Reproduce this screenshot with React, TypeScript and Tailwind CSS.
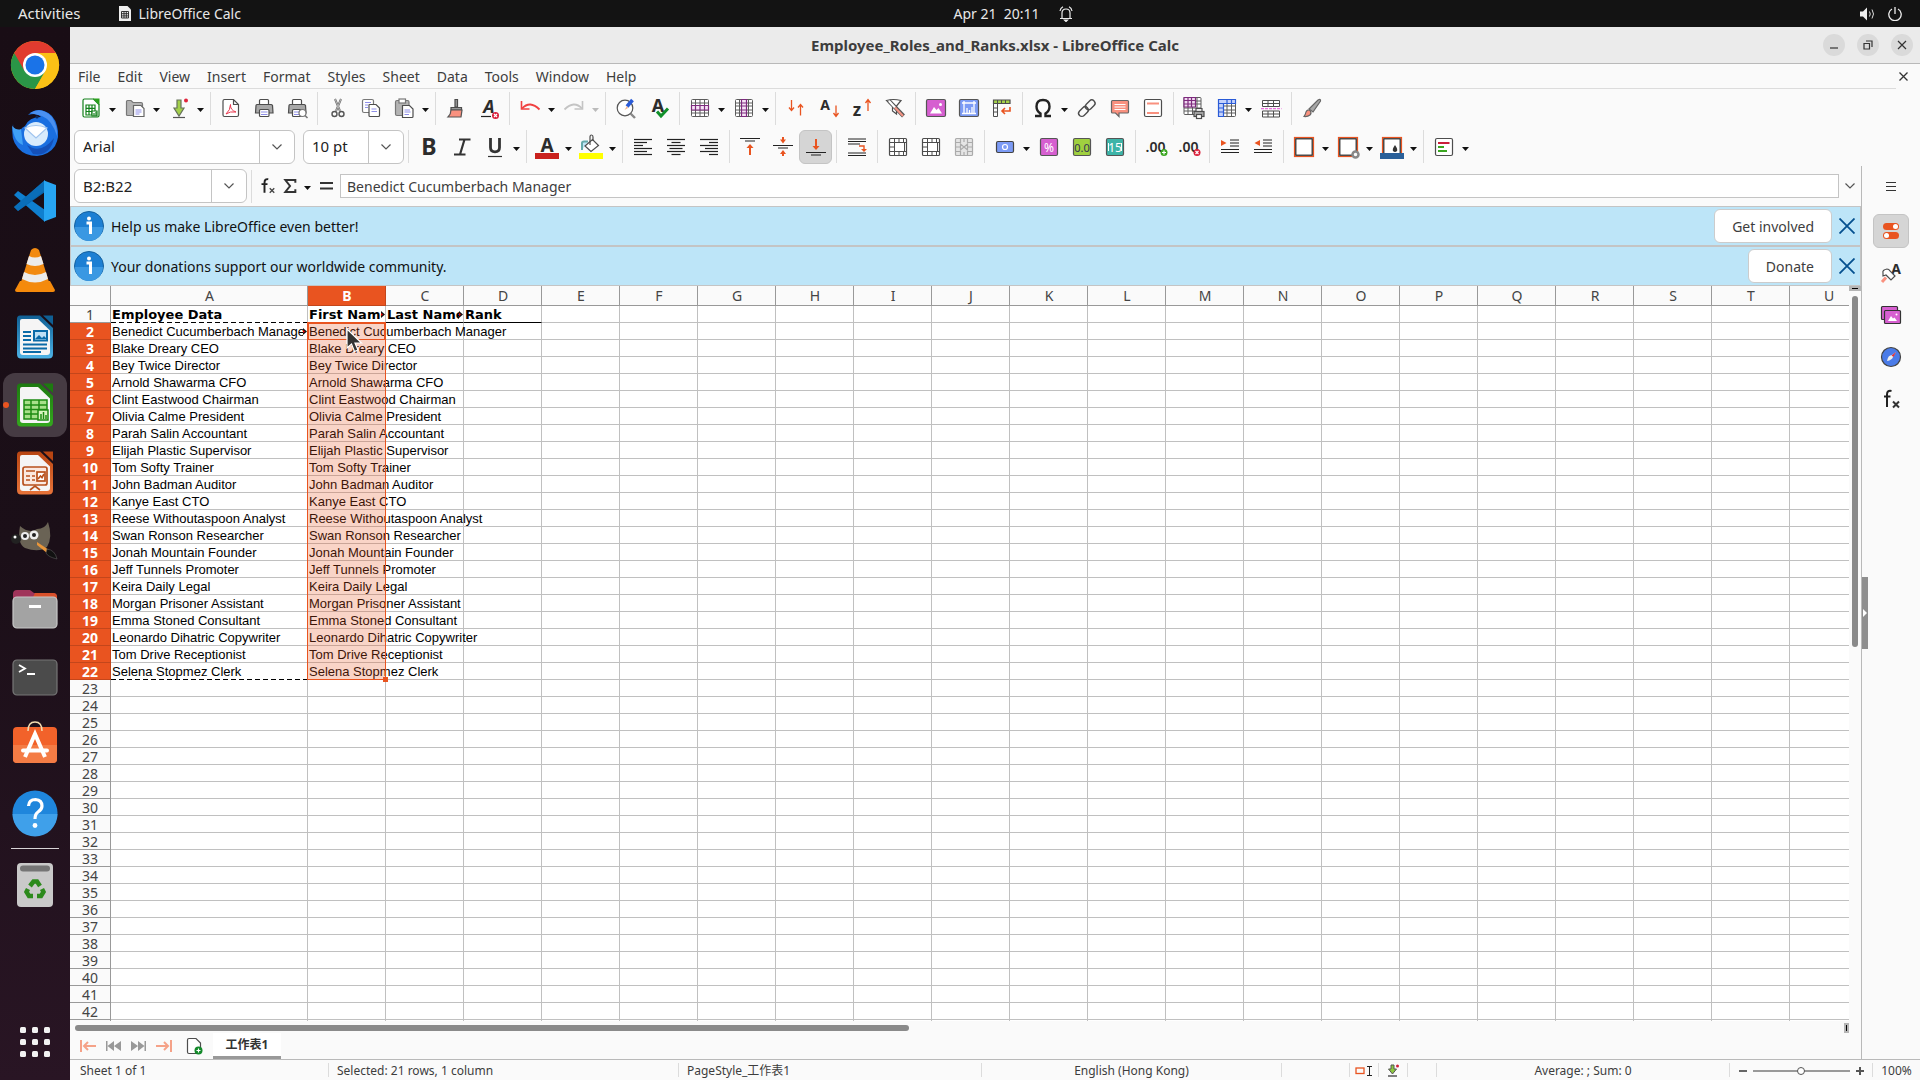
import React from "react";

const people = [
  "Benedict Cucumberbach Manager", "Blake Dreary CEO", "Bey Twice Director", "Arnold Shawarma CFO",
  "Clint Eastwood Chairman", "Olivia Calme President", "Parah Salin Accountant", "Elijah Plastic Supervisor",
  "Tom Softy Trainer", "John Badman Auditor", "Kanye East CTO", "Reese Withoutaspoon Analyst",
  "Swan Ronson Researcher", "Jonah Mountain Founder", "Jeff Tunnels Promoter", "Keira Daily Legal",
  "Morgan Prisoner Assistant", "Emma Stoned Consultant", "Leonardo Dihatric Copywriter",
  "Tom Drive Receptionist", "Selena Stopmez Clerk",
];
const columns = "ABCDEFGHIJKLMNOPQRSTU".split("");
const menus = ["File", "Edit", "View", "Insert", "Format", "Styles", "Sheet", "Data", "Tools", "Window", "Help"];

const G = "#4d4d4d";
const O = "#e95420";
const P = "#7d2a7d";

function Ic({ children, s = 24, vb = 24 }: { children: React.ReactNode; s?: number; vb?: number }) {
  return (
    <svg width={s} height={s} viewBox={`0 0 ${vb} ${vb}`} fill="none" stroke={G} strokeWidth="1.2" className="shrink-0 overflow-visible" aria-hidden="true">
      {children}
    </svg>
  );
}

/* ---------- toolbar drawings ---------- */
const box = <rect x="3.5" y="3.5" width="17" height="17" rx="1" fill="#fff" />;
const printer = (
  <>
    <path d="M7.5 9V4.5Q7.5 3.5 8.5 3.5H15.5Q16.5 3.5 16.5 4.5V9" fill="#fff" />
    <path d="M4 9.5Q4 8.5 5 8.5H19Q20 8.5 20.5 9.5L21 17H3.5Z" fill="#a8a8a8" />
    <rect x="7.5" y="13.5" width="9.500" height="7" rx="1" fill="#fff" />
    <path d="M9 16H15.5M9 18.500H15.5" stroke="#8f8fe8" />
  </>
);
const alignLines = (w: number[], from: "l" | "c" | "r") =>
  w.map((n, i) => {
    const x = from === "l" ? 3 : from === "c" ? 12 - n / 2 : 21 - n;
    return <path key={i} d={`M${x} ${4.5 + i * 3}H${x + n}`} stroke="#222" />;
  });
const grid = <path d="M3.500 4.500Q3.500 3.500 4.500 3.500H19.500Q20.500 3.500 20.500 4.500V19.500Q20.500 20.500 19.500 20.500H4.500Q3.500 20.500 3.500 19.500ZM3.500 7H20.500M3.500 10H20.500M3.500 14H20.500M3.500 17H20.500M7.500 3.500V20.500M12 3.500V20.500M16.500 3.500V20.500" fill="#fff" stroke="#5c5c5c" strokeWidth="1" />;
const merge = (
  <>
    {box}
    <path d="M8.500 3.500V20.500M3.500 7.500H20.500M3.500 12H8.500M3.500 16.500H20.500M13 3.500V7.500M17.500 3.500V7.500M13 16.500V20.500M17.500 16.500V20.500M18.500 7.500V16.500" strokeWidth="1" />
  </>
);
const letter = (t: string, x: number, y: number, size: number, extra: React.SVGProps<SVGTextElement> = {}) => (
  <text x={x} y={y} fontSize={size} fontFamily="Noto Sans, sans-serif" fontWeight="bold" fill="#2c2c2c" stroke="none" textAnchor="middle" {...extra}>{t}</text>
);
const badge = (c: string, x: number, y: number, plus: boolean) => (
  <>
    <circle cx={x} cy={y} r="3.500" fill={c} stroke="none" />
    {plus ? <path d={`M${x - 2} ${y}H${x + 2}M${x} ${y - 2}V${y + 2}`} stroke="#fff" strokeWidth="1.200" /> : <path d={`M${x - 1.5} ${y - 1.5}L${x + 1.5} ${y + 1.5}M${x + 1.5} ${y - 1.5}L${x - 1.5} ${y + 1.5}`} stroke="#fff" strokeWidth="1.200" />}
  </>
);
const lens = <><circle cx="17.500" cy="17" r="3.500" fill="#fff" stroke="#777" /><path d="M20 19.500L22.500 22" stroke="#777" strokeWidth="1.600" /></>;

const icons: Record<string, React.ReactNode> = {
  "New": <><path d="M5.500 3H14.500L20 8.500V19.500Q20 21 18.500 21H5.500Q4 21 4 19.500V4.500Q4 3 5.500 3Z" fill="#fff" stroke="#12801a" /><path d="M14 2.500H20.500V9Z" fill="#2aa01c" stroke="none" /><path d="M7 9H16V19H7ZM7 12.300H16M7 15.500H16M10 9V19M13 9V19" stroke="#12801a" /><path d="M13 20V15H18V20Z" fill="#fff" stroke="#12801a" /><path d="M15 20V17M17 20V16" stroke="#12801a" /></>,
  "Open": <><path d="M3.500 19V5.500Q3.500 4.500 4.500 4.500H8L10 6.500H18Q19.500 6.500 19.500 8V19Q19.500 19.500 18.500 19.500H4.500Q3.500 19.500 3.500 18.500Z" fill="#b3b3b3" stroke="#777" /><path d="M10.500 9.500H18L21 12.500V20.500H10.500Z" fill="#fff" stroke="#666" /><path d="M12.500 14H18.500M12.500 16H18.500M12.500 18H16.500" stroke="#8f8fe8" /></>,
  "Save": <><path d="M10 4H14V12H17L12 20L7 12H10Z" fill="#a3d04a" stroke="#66725a" /><path d="M6 21.500H18" stroke="#555" /><circle cx="19" cy="4.500" r="2" fill="#e0243b" stroke="none" /></>,
  "Export as PDF": <><path d="M5.500 3.500H14.500L19.500 8.500V19Q19.500 20.500 18 20.500H5.500Q4 20.500 4 19V5Q4 3.500 5.500 3.500ZM14.500 3.500V8.500H19.500" fill="#fff" /><path d="M7 18Q11.500 14 11.500 8.500Q11 14 17 16Q11 15 7 18Z" stroke="#e8384f" strokeWidth="1" /></>,
  "Print": printer,
  "Print Preview": <>{printer}{lens}</>,
  "Cut": <><path d="M9 3L14 15M15 3L10 15" stroke="#666" strokeWidth="2" /><path d="M9 3L14 15M15 3L10 15" stroke="#ccc" strokeWidth="0.800" /><circle cx="8.500" cy="18" r="2.500" stroke="#555" strokeWidth="1.400" /><circle cx="15.500" cy="18" r="2.500" stroke="#555" strokeWidth="1.400" /></>,
  "Copy": <><rect x="3.500" y="3.500" width="11" height="13" rx="1.500" fill="#fff" stroke="#777" /><path d="M6 6.500H12M6 9H9M6 11.500H9" stroke="#8f8fe8" /><path d="M10.500 8.500H17L20.500 12V19.500Q20.500 20.500 19.500 20.500H11Q10 20.500 10 19.500V9Q10 8.500 10.500 8.500Z" fill="#fff" /><path d="M12.500 13H17.500M12.500 15.500H18" stroke="#8f8fe8" /></>,
  "Paste": <><rect x="3.500" y="4.500" width="13.500" height="15" rx="1.500" fill="#b3b3b3" stroke="#777" /><rect x="7" y="3" width="6.500" height="4" fill="#fff" stroke="#777" /><path d="M10.500 9.500H17.500L21 13V20.500Q21 21.500 20 21.500H10.500Z" fill="#fff" /><path d="M12.500 14H18M12.500 16H18.500M12.500 18.500H17" stroke="#8f8fe8" /></>,
  "Clone Formatting": <><path d="M11 3.500H13.500V11H11Z" fill="#999" /><path d="M7 11.500H17.500V14H7Z" fill="#999" /><path d="M7 14H18L17 21H4Q7 18 7 14Z" fill="#f9917f" stroke="#555" /></>,
  "Clear Direct Formatting": <>{letter("A", 12, 17, 18, { fontStyle: "italic" })}<path d="M4 20.500H14" stroke="#222" />{badge("#d9203a", 18.500, 19.500, false)}</>,
  "Undo": <><path d="M3.500 5V13H11.500" stroke="#f04040" strokeWidth="1.600" /><path d="M4 12.500Q12 4 21.500 13.500" stroke="#f04040" strokeWidth="1.800" /></>,
  "Redo": <><path d="M20.500 5V13H12.500" stroke="#c4c4c4" strokeWidth="1.600" /><path d="M20 12.500Q12 4 2.500 13.500" stroke="#c4c4c4" strokeWidth="1.800" /></>,
  "Find and Replace": <><circle cx="11" cy="12" r="7.800" fill="#fff" stroke="#555" /><path d="M16.500 17.500L21 22" stroke="#888" strokeWidth="2.400" /><path d="M18.500 4L13 10.500" stroke="#2a5bd7" strokeWidth="3.600" /><path d="M13 10L10.500 14L14 12" fill="#f5b48a" stroke="none" /></>,
  "Spelling": <>{letter("A", 11, 16, 18)}<path d="M10 15.500L14 20L21 12.500" stroke="#12902a" strokeWidth="3" /></>,
  "Row": <>{grid}<path d="M3.500 9.500H20.500V14H3.500ZM7.500 9.500V14M12 9.500V14M16.500 9.500V14" fill="#f5e3f5" stroke={P} /></>,
  "Column": <>{grid}<path d="M9.500 3.500H14.500V20.500H9.500ZM9.500 7H14.500M9.500 10H14.500M9.500 14H14.500M9.500 17H14.500" fill="#f5e3f5" stroke={P} /></>,
  "Sort": <path d="M7.500 4V14M5 11.500L7.500 14.500L10 11.500M16.500 19.500V9M14 11.500L16.500 8.500L19 11.500" stroke={O} strokeWidth="1.300" />,
  "Sort Ascending": <>{letter("A", 8, 14, 14)}<path d="M19 9.500V20M16.500 17L19 20.500L21.500 17" stroke={O} strokeWidth="1.300" /></>,
  "Sort Descending": <>{letter("z", 7, 20, 17)}<path d="M18 15V4M15.500 7L18 3.500L20.500 7" stroke={O} strokeWidth="1.300" /></>,
  "AutoFilter": <><path d="M3.500 4.500Q10 2.500 18 4.500L13.500 10V18L9.500 15V10Z" fill="#fff" /><path d="M6 5L20.500 20" stroke="#555" strokeWidth="4" /><path d="M6 5L12 11.500" stroke="#fff" strokeWidth="2.200" /><path d="M12 11.500L20 20" stroke="#f49484" strokeWidth="2.200" /></>,
  "Image": <><rect x="2.500" y="3.500" width="19" height="17" rx="1.500" fill="#d65fd0" stroke="#555" /><path d="M6 17.500L10 11L12.500 14L14.500 12L18 17.500Z" fill="#fff" stroke="none" /><circle cx="16.500" cy="8.500" r="1.500" fill="#fff" stroke="none" /></>,
  "Chart": <><rect x="2.500" y="3.500" width="19" height="17" rx="1.500" fill="#7c9bf5" stroke="#555" /><path d="M5 7H19M7 5V18M5 17.500H19M17 5V18M10 17V12M12.500 17V14M15 17V11" stroke="#fff" strokeWidth="1.300" /></>,
  "Pivot Table": <><path d="M3.500 4H20V7.500H3.500Z" fill="#a3d04a" /><path d="M7.500 4V7.500M11.500 4V7.500M15.500 4V7.500M3.500 7.500V20.500H7.500V7.500M3.500 12H7.500M3.500 16H7.500" strokeWidth="1" /><path d="M20 11V15H12M15 12L12 15L15 18" stroke={O} strokeWidth="1.600" /></>,
  "Special Character": <path d="M4 20H9.500V17.500Q5.500 15 5.500 10.500Q5.500 4 12 4Q18.500 4 18.500 10.500Q18.500 15 14.500 17.500V20H20" stroke="#222" strokeWidth="2.400" />,
  "Hyperlink": <g transform="rotate(-45 12 12)"><rect x="1.500" y="8.800" width="11" height="6.400" rx="3.200" strokeWidth="1.400" /><rect x="11" y="8.800" width="11" height="6.400" rx="3.200" strokeWidth="1.400" /></g>,
  "Comment": <><path d="M4.500 4.500H19.500Q20.500 4.500 20.500 5.500V16Q20.500 17 19.500 17H11V20.500L7.500 17H4.500Q3.500 17 3.500 16V5.500Q3.500 4.500 4.500 4.500Z" fill="#f9917f" stroke="#666" /><path d="M6.500 8.500H17.500M6.500 11H17.500M6.500 13.500H17.500" stroke="#fff" /></>,
  "Headers and Footers": <><rect x="3.500" y="3.500" width="17" height="17" rx="1.500" fill="#fff" /><path d="M6 7.500H18M6 17H18" stroke="#f9917f" strokeWidth="2" /></>,
  "Print Area": <><g transform="translate(-1.500 -2)">{grid}<path d="M3.500 3.500H15V13H3.500ZM3.500 6.500H15M3.500 10H15M7.500 3.500V13M11 3.500V13" fill="#f0d8f0" stroke={P} /></g><path d="M14 17V12.500H20V17" fill="#eee" /><rect x="12" y="15.500" width="10" height="5" fill="#aaa" /><rect x="14.500" y="18.500" width="5" height="4" fill="#fff" /></>,
  "Freeze": <>{grid}<path d="M3.500 3.500H20.500V7.500H8.500V20.500H3.500Z" fill="#c5d2fb" stroke="#2a5bd7" /><path d="M3.500 7.500H8.500M3.500 12H8.500M3.500 16H8.500M12 3.500V7.500M16.500 3.500V7.500" stroke="#2a5bd7" /></>,
  "Split": <><path d="M3.500 4.500H20.500V10.500H3.500ZM3.500 7.500H20.500M9 4.500V10.500M14.500 4.500V10.500M3.500 15H20.500V21H3.500ZM3.500 18H20.500M9 15V21M14.500 15V21" fill="#fff" strokeWidth="1" /><path d="M2 12.700H22.500" stroke="#ec6fe0" strokeDasharray="3 1" /></>,
  "Draw": <><path d="M9 13L18 4Q21 2.500 20.500 5L13 16Z" fill="#a8a8a8" stroke="#666" /><path d="M4 20.500Q5.500 18.500 6 16Q7.500 13 10 14.500Q12 17 10 19Q7.500 21 4 20.500Z" fill="#f9917f" stroke="#666" /></>,
  "Bold": letter("B", 12, 20, 23),
  "Italic": <path d="M9 4.500H20.500M4 19.500H15.500M14.500 4.500L10 19.500" stroke="#333" strokeWidth="2.200" />,
  "Underline": <><path d="M7.500 3V12.500Q7.500 16.800 12 16.800Q16.500 16.800 16.500 12.500V3" stroke="#333" strokeWidth="2.800" /><path d="M5 21.500H19" stroke="#333" /></>,
  "Font Color": <>{letter("A", 12, 17, 19)}<rect x="0" y="18" width="24" height="6" fill="#c9211e" stroke="none" /></>,
  "Background Color": <><path d="M3 15V8Q3 6.500 5 6.500H9" fill="#bfe6f7" stroke="#6aa" strokeWidth="2" /><path d="M6 11L13.500 4.500L19.500 10.500L12 16.500Z" fill="#fff" /><path d="M11 10V2Q11 0 12.500 0Q14 0 14 2V6" /><rect x="0" y="18" width="24" height="6" fill="#ffff00" stroke="none" /></>,
  "Align Left": alignLines([18, 13, 9, 18, 13, 18], "l"),
  "Center Horizontally": alignLines([18, 9, 18, 13, 18, 9], "c"),
  "Align Right": alignLines([18, 9, 18, 13, 18, 9], "r"),
  "Align Top": <><path d="M2 3.500H22M7 6H17" stroke="#222" /><path d="M12 20V10" stroke={O} strokeWidth="2" /><path d="M8.500 13L12 9L15.500 13Z" fill={O} stroke="none" /></>,
  "Center Vertically": <><path d="M2 10.500H22M7 13H17" stroke="#222" /><path d="M12 2V5M12 21V18" stroke={O} strokeWidth="2" /><path d="M9 4.500H15L12 8.500ZM9 19H15L12 15Z" fill={O} stroke="none" /></>,
  "Align Bottom": <><path d="M2 17.500H22M7 20H17" stroke="#222" /><path d="M12 4V12" stroke={O} strokeWidth="2" /><path d="M8.500 11H15.500L12 15Z" fill={O} stroke="none" /></>,
  "Wrap Text": <><path d="M3 4H21M3 6.500H21M3 9H15M3 18H21M3 20.500H21" stroke="#222" /><path d="M14 11H19V15" stroke={O} strokeWidth="1.400" /><path d="M16 14H22L19 17Z" fill={O} stroke="none" /></>,
  "Merge and Center Cells": merge,
  "Merge Cells": merge,
  "Unmerge Cells": <g opacity="0.450"><rect x="3.500" y="3.500" width="17" height="17" rx="1" fill="#ccc" /><path d="M8.500 3.500V7.500H3.500M3.500 12H8M15.500 3.500V7.500H20.500M16 12H20.500M8.500 20.500V16.500H3.500M15.500 20.500V16.500H20.500M12 3.500V7M12 17V20.500M8.500 9V15L12 12ZM15.500 9V15L12 12Z" /></g>,
  "Format as Currency": <><rect x="3.500" y="6.500" width="17" height="11" rx="1.500" fill="#7c9bf5" stroke="#444" /><circle cx="12" cy="12" r="2.500" stroke="#fff" /></>,
  "Format as Percent": <><rect x="3.500" y="3.500" width="17" height="17" rx="1.500" fill="#d65fd0" stroke="#555" />{letter("%", 12, 17, 12, { fill: "#fff", fontWeight: "normal" })}</>,
  "Format as Number": <><rect x="3.500" y="3.500" width="17" height="17" rx="1.500" fill="#9fd03f" stroke="#555" />{letter("0.0", 12, 17, 11, { fill: "#335", fontWeight: "normal" })}</>,
  "Format as Date": <><rect x="3.500" y="3.500" width="17" height="17" rx="1.500" fill="#3db4a8" stroke="#555" />{letter("15", 12, 17, 12, { fill: "#fff", fontWeight: "normal" })}<path d="M5.500 8V16M18.500 8V16" stroke="#fff" strokeWidth="1" /></>,
  "Add Decimal Place": <>{letter(".00", 11.500, 17, 14, { fontWeight: 600 })}{badge("#3aa620", 20, 17.500, true)}</>,
  "Delete Decimal Place": <>{letter(".00", 11.500, 17, 14, { fontWeight: 600 })}{badge("#d9203a", 20, 17.500, false)}</>,
  "Increase Indent": <><path d="M12 5H21M12 8H21M12 11H21M3 14.500H21M3 17.500H21" stroke="#222" /><path d="M3 5V11L8.500 8Z" fill={O} stroke="none" /></>,
  "Decrease Indent": <><path d="M12 5H21M12 8H21M12 11H21M3 14.500H21M3 17.500H21" stroke="#222" /><path d="M9 5V11L3.500 8Z" fill={O} stroke="none" /></>,
  "Borders": <><rect x="2.500" y="2.500" width="19" height="19" fill="#fff" stroke={O} strokeWidth="1.200" /><rect x="3.800" y="3.800" width="16.400" height="16.400" stroke="#222" /></>,
  "Border Style": <><rect x="2.500" y="2.500" width="19" height="19" fill="#fff" stroke={O} strokeWidth="1.200" /><rect x="3.800" y="3.800" width="16.400" height="16.400" stroke="#222" /><circle cx="19.500" cy="19.500" r="3" fill="#fafafa" stroke="#888" strokeWidth="2.500" /></>,
  "Border Color": <><rect x="2.500" y="2.500" width="19" height="17" fill="#fff" stroke={O} strokeWidth="1.200" /><rect x="3.800" y="3.800" width="16.400" height="16.400" stroke="#222" /><path d="M15 10Q18 14 17 16Q15 18 13 16Q12 14 15 10Z" fill="#333" stroke="none" /><rect x="0" y="18" width="24" height="6" fill="#2a6099" stroke="none" /></>,
  "Conditional": <><rect x="3.500" y="3.500" width="17" height="17" rx="1.500" fill="#fff" /><path d="M6 8H17.500" stroke="#c9203a" strokeWidth="2" /><path d="M6 12H12M6 16H15" stroke="#3aa620" strokeWidth="2" /></>,
};

function Caret({ label, muted = false }: { label: string; muted?: boolean }) {
  return (
    <button type="button" aria-label={label + " options"} className="flex h-8 w-[11px] shrink-0 items-center justify-center">
      <svg width="7" height="4" viewBox="0 0 7 4" className="mt-1" aria-hidden="true"><path d="M0 0H7L3.500 4Z" fill={muted ? "#bbb" : "#111"} /></svg>
    </button>
  );
}
function Sep() {
  return <span className="flex h-[33px] w-2 shrink-0 justify-center"><span className="w-px bg-[#dcdcdc]" /></span>;
}
/* "|" is a separator, a trailing ">" adds a drop-down arrow. */
function Tools({ items }: { items: string[] }) {
  return (
    <>
      {items.map((it, i) => {
        if (it === "|") return <Sep key={i} />;
        const drop = it.endsWith(">");
        const name = drop ? it.slice(0, -1) : it;
        return (
          <React.Fragment key={i}>
            <button
              type="button"
              aria-label={name}
              className={name === "Align Bottom" ? "flex h-[34px] w-[33px] shrink-0 items-center justify-center rounded-md border border-[#c4c4c4] bg-[#d5d5d5]" : "flex h-[34px] w-[33px] shrink-0 items-center justify-center"}
            >
              <Ic>{icons[name]}</Ic>
            </button>
            {drop && <Caret label={name} muted={name === "Redo"} />}
          </React.Fragment>
        );
      })}
    </>
  );
}

function Chevron() {
  return <svg width="10" height="6" viewBox="0 0 10 6" fill="none" stroke="#555" strokeWidth="1.200" aria-hidden="true"><path d="M0.500 0.500L5 5L9.500 0.500" /></svg>;
}
function Combo({ label, value, box }: { label: string; value: string; box: string }) {
  return (
    <div className={"flex h-[34px] shrink-0 overflow-hidden rounded-md border border-[#c4c4c4] bg-white " + box}>
      <input aria-label={label} defaultValue={value} className="min-w-0 flex-1 px-2 text-[15px] text-[#222] outline-none" />
      <button type="button" aria-label={label + " list"} className="flex w-[35px] items-center justify-center border-l border-[#c4c4c4]"><Chevron /></button>
    </div>
  );
}

/* ---------- dock drawings (48 px canvas) ---------- */
const docIcon = (main: string, dark: string, inner: React.ReactNode) => (
  <>
    <defs><linearGradient id={"g" + main.slice(1)} x1="0" y1="0" x2="0" y2="1"><stop offset="0" stopColor={dark} /><stop offset="1" stopColor={main} /></linearGradient></defs>
    <path d="M9 2.500H29L42 15V41Q42 45.500 37.500 45.500H10Q6 45.500 6 41V6Q6 2.500 9 2.500Z" fill={`url(#g${main.slice(1)})`} stroke="none" />
    <path d="M11 6H27L39 17.500V39Q39 42 36 42H12Q9 42 9 39V8Q9 6 11 6Z" fill="#f5f5f5" stroke="none" />
    <path d="M32 2.500H42V12Z" fill={dark} stroke="none" />
    {inner}
  </>
);
const dock: { name: string; art: React.ReactNode }[] = [
  { name: "Google Chrome", art: <g stroke="none"><circle cx="24" cy="24" r="24" fill="#fbbc05" /><path d="M24 24L3.200 12A24 24 0 0 0 24 48L34.400 30Z" fill="#2a9647" /><path d="M24 24V12H44.800A24 24 0 0 0 3.200 12L13.600 30Z" fill="#e13b2f" /><path d="M24 12H44.800A24 24 0 0 1 24 48L34.400 30Z" fill="#fbc116" /><circle cx="24" cy="24" r="12" fill="#fff" /><circle cx="24" cy="24" r="9.500" fill="#1a73e8" /></g> },
  { name: "Thunderbird", art: <g stroke="none"><path d="M2 15Q-1 30 7 39Q14 47 26 47Q38 46 44 37Q49 28 46 17Q43 5 33 2Q24 -1 17 6Q26 3 30 8Q18 8 14 17Q8 20 7 27Q2 22 2 15Z" fill="#1a6fe0" /><path d="M1 17Q6 22 10 20L12 36Q3 33 1 17Z" fill="#3fa0f5" /><path d="M19 4Q31 -3 41 8Q47 18 46 27Q41 11 31 7Z" fill="#4a90f0" /><path d="M16 36Q30 46 43 29Q39 48 22 45Z" fill="#1450b8" /><circle cx="25" cy="25" r="12" fill="#d8ebfc" /><path d="M14 19L25 29L36 19Q25 14 14 19Z" fill="#fff" stroke="#a0c4ee" /><circle cx="26" cy="8" r="1.500" fill="#0a2a60" /></g> },
  { name: "Visual Studio Code", art: <g stroke="none"><path d="M3 18L7 14L34 33V45Z" fill="#0f7fcf" /><path d="M3 30L7 34L34 15V3Z" fill="#0a66ae" /><path d="M3 30L7 34L34 13V3Z" fill="#0a70bc" opacity="0.800" /><path d="M33 3.500L45 8V40L33 44.500Z" fill="#27a5f2" /></g> },
  { name: "VLC", art: <g stroke="none"><path d="M9 36H39L44 45Q44 47 42 47H6Q4 47 4 45Z" fill="#f58a0b" /><path d="M20 5Q24 1 28 5L38 37Q24 45 10 37Z" fill="#f28a10" /><path d="M18 11Q24 14 30 11L32.500 19Q24 23 15.500 19ZM13 27Q24 33 35 27L37 34Q24 41 11 34Z" fill="#ececec" /></g> },
  { name: "LibreOffice Writer", art: docIcon("#4db3e6", "#0f5f94", <g stroke="#0b6ba8" strokeWidth="2"><path d="M12 19H20M12 23H20M12 27H20M12 31.500H36M12 35.500H36M12 39H30" /><rect x="23" y="18" width="13" height="9.500" fill="#bfe0f5" /><path d="M24 26L28 22L31 25L33 23L36 26Z" fill="#0b6ba8" stroke="none" /></g>) },
  { name: "LibreOffice Calc", art: docIcon("#34a81e", "#1d7a10", <g stroke="#1d8a12" strokeWidth="1.500"><path d="M13 19H36V38H13ZM13 24H36M13 28.500H36M13 33H36M20 19V38M28 19V38" fill="#a8e08a" /><rect x="27" y="29" width="10" height="10" fill="#d8f5c0" /><path d="M30 38V33M32.500 38V31M35 38V34" /></g>) },
  { name: "LibreOffice Impress", art: docIcon("#e8743a", "#b84512", <g stroke="#b8501c" strokeWidth="1.700"><rect x="12" y="18" width="24" height="18" rx="2" fill="#fbe9e0" /><path d="M15 22H24M15 27H19M15 31H19M21 27H24M21 31H24M19 41L24 37L29 41" /><rect x="26" y="23" width="8" height="9" fill="#fff" /><path d="M27 30L29.500 27L31 28.500L33 25" /></g>) },
  { name: "GIMP", art: <g stroke="none"><path d="M9 9Q18 17 26 12Q34 12 37 5Q42 20 36 30Q28 36 14 31Q6 27 9 9Z" fill="#6a6355" /><circle cx="5" cy="22" r="5" fill="#222" /><circle cx="4" cy="20" r="1.500" fill="#fff" /><circle cx="14" cy="19" r="4" fill="#eee" /><circle cx="23" cy="18" r="4.500" fill="#eee" /><circle cx="14" cy="19" r="2" fill="#222" /><circle cx="23" cy="18" r="2" fill="#222" /><path d="M26 25L38 33L36 36L26 28Z" fill="#e8963a" /><path d="M36 32Q44 33 46 42Q37 40 35 36Z" fill="#111" stroke="#666" strokeWidth="0.500" /></g> },
  { name: "Files", art: <g stroke="none"><path d="M2 14V9Q2 5 6 5H19L23 8H42Q46 8 46 12V16H2Z" fill="#a0345a" /><path d="M24 8H42Q46 8 46 12V16H20Z" fill="#d8502a" /><rect x="2" y="12" width="44" height="31" rx="4" fill="#a3a3a3" stroke="#c8c8c8" /><path d="M18 21.500H30" stroke="#fff" strokeWidth="3" /></g> },
  { name: "Terminal", art: <g stroke="none"><rect x="2" y="7" width="44" height="35" rx="4" fill="#4b4b4b" stroke="#777" /><path d="M8 12L14 15.500L8 19M16 21H24" fill="none" stroke="#fff" strokeWidth="1.800" /></g> },
  { name: "Ubuntu Software", art: <g stroke="none"><rect x="2" y="6" width="44" height="36" rx="4" fill="#f2622a" /><path d="M2 24H46V38Q46 42 42 42H6Q2 42 2 38Z" fill="#f47c45" /><path d="M17 10Q17 1 24 1Q31 1 31 10" fill="none" stroke="#f3dcb0" strokeWidth="1.500" /><path d="M14 36L24 13L34 36" fill="none" stroke="#fff" strokeWidth="4" /><path d="M12 29.500H36" stroke="#fff" strokeWidth="4" strokeLinecap="round" /></g> },
  { name: "Help", art: <g stroke="none"><circle cx="24" cy="24" r="22.500" fill="#1f86dc" /><path d="M1.500 25H46.500A22.500 22.500 0 0 1 1.500 25Z" fill="#3fa0ea" /><path d="M17.500 17Q18 10.500 24.500 10.500Q31 11 31 17Q31 20.500 27 23Q24 25 24 30" fill="none" stroke="#fff" strokeWidth="3.200" /><circle cx="24" cy="36.500" r="2.400" fill="#fff" /></g> },
];
const trash = (
  <g stroke="none"><rect x="6" y="2" width="36" height="44" rx="4" fill="#c9c9c9" /><rect x="9" y="4.500" width="30" height="6" rx="3" fill="#757575" /><g fill="none" stroke="#2c8a1c" strokeWidth="4.500"><path d="M19 25L22.500 20.500H26L29 25" /><path d="M17 28L15.500 31L18 35H22" /><path d="M31 28L32.500 31L30 35H26" /></g></g>
);

function DockButton({ name, art, active = false }: { name: string; art: React.ReactNode; active?: boolean }) {
  return (
    <button type="button" aria-label={name} className={active ? "relative flex h-16 w-16 shrink-0 items-center justify-center rounded-xl bg-[#463b43]" : "relative flex h-16 w-16 shrink-0 items-center justify-center"}>
      {active && <span className="absolute left-0 h-1.5 w-1.5 rounded-full bg-[#e95420]" />}
      <Ic s={48} vb={48}>{art}</Ic>
    </button>
  );
}

function InfoBar({ text, action }: { text: string; action: string }) {
  return (
    <div className="flex h-10 shrink-0 items-center border border-[#c4c4c4] bg-[#bde5f8] pl-[3px] pr-[5px]">
      <svg width="30" height="30" viewBox="0 0 30 30" aria-hidden="true">
        <circle cx="15" cy="15" r="14.500" fill="#1c7fd3" stroke="#15619f" />
        <path d="M1 16A14 14 0 0 0 29 16Z" fill="#3a98e2" />
        <circle cx="15" cy="7.500" r="2" fill="#fff" /><path d="M12.500 12H16.500V23" fill="none" stroke="#fff" strokeWidth="3" />
      </svg>
      <p className="ml-[7px] flex-1 text-[14px] text-[#111]">{text}</p>
      <button type="button" className="h-[34px] rounded-md border border-[#ccc] bg-white px-[17px] text-[14px] text-[#3d3d3d]">{action}</button>
      <button type="button" aria-label={"Close: " + text} className="ml-[7px]">
        <svg width="16" height="16" viewBox="0 0 16 16" stroke="#04508f" strokeWidth="1.800" aria-hidden="true"><path d="M0.500 0.500L15.500 15.500M15.500 0.500L0.500 15.500" /></svg>
      </button>
    </div>
  );
}

const headText: Record<string, string> = { A: "Employee Data", B: "First Name", C: "Last Name", D: "Rank" };
function CutMark() {
  return <svg width="4" height="7" viewBox="0 0 4 7" className="mt-[5px] shrink-0" aria-hidden="true"><path d="M0 0L4 3.500L0 7Z" fill="#111" /><path d="M0 2L2 3.500L0 5Z" fill="#e00" /></svg>;
}

function Sheet() {
  return (
    <div className="relative min-h-0 min-w-0 flex-1 overflow-hidden bg-white">
      <table className="w-[1798px] table-fixed border-separate border-spacing-0 whitespace-nowrap">
        <colgroup>
          <col className="w-[41px]" />
          <col className="w-[197px]" />
          {columns.slice(1).map((c) => <col key={c} className="w-[78px]" />)}
        </colgroup>
        <thead>
          <tr className="h-5">
            <td aria-label="Select all" className="border-b border-r border-[#999] bg-[#fafafa] p-0" />
            {columns.map((c) => (
              <th key={c} scope="col" className={c === "B" ? "border-b border-r border-[#c3461b] bg-[#e95420] p-0 pl-px text-[14px] font-bold leading-[18px] text-white" : "border-b border-r border-[#999] bg-[#fafafa] p-0 pl-px text-[14px] font-normal leading-[18px] text-[#444]"}>{c}</th>
            ))}
          </tr>
        </thead>
        <tbody>
          {Array.from({ length: 43 }, (_, i) => i + 1).map((r) => (
            <tr key={r} className="h-[17px]">
              <th scope="row" className={r >= 2 && r <= 22 ? "border-b border-r border-[#c3461b] bg-[#e95420] p-0 text-[14px] font-bold text-white" : "border-b border-r border-[#999] bg-[#fafafa] p-0 text-[14px] font-normal text-[#444]"}>
                <div className="h-4 leading-[18px]">{r <= 42 ? r : ""}</div>
              </th>
              {columns.map((c) => {
                const edge = r === 1 && (c === "B" || c === "C" || c === "D") ? "border-b-black" : "border-b-[#c0c0c0]";
                const text = r === 1 ? headText[c] ?? "" : r <= 22 && (c === "A" || c === "B") ? people[r - 2] : "";
                const cut = (r === 1 && (c === "B" || c === "C")) || (r === 2 && c === "A");
                return (
                  <td key={c} className={"border-b border-r border-r-[#c0c0c0] p-0 text-black " + edge}>
                    {text && (
                      <div className={(cut ? "flex " : "") + (r === 1 ? "h-4 pl-px font-['DejaVu_Sans'] text-[13px] font-bold leading-[18px]" : "h-4 pl-px font-['Liberation_Sans'] text-[13px] leading-[17px]")}>
                        {cut ? <><span className="min-w-0 flex-1 overflow-hidden">{text}</span><CutMark /></> : text}
                      </div>
                    )}
                  </td>
                );
              })}
            </tr>
          ))}
        </tbody>
      </table>
      {/* copied range, selected range, active cell, fill handle and pointer */}
      <div className="pointer-events-none absolute left-[41px] top-9 flex h-[358px] w-[196px] flex-col justify-between">
        <div className="h-px bg-[repeating-linear-gradient(90deg,#000_0_5px,#fff_5px_8px)]" />
        <div className="h-px bg-[repeating-linear-gradient(90deg,#000_0_5px,#fff_5px_8px)]" />
      </div>
      <div className="pointer-events-none absolute left-[237px] top-9 h-[358px] w-[79px] border border-[#e95420] bg-[#e95420]/25">
        <div className="h-[17px] border border-[#e95420]" />
        <div className="absolute -bottom-[3px] -right-[3px] h-[5px] w-[5px] bg-[#e95420]" />
      </div>
      <svg width="18" height="26" viewBox="0 0 18 26" className="pointer-events-none absolute left-[276px] top-[42px]" aria-hidden="true"><path d="M1 1V20L5.500 16L8.500 23.500L12 22L9 15H15.500Z" fill="#333" stroke="#fff" strokeWidth="1.200" /></svg>
    </div>
  );
}

const side: { name: string; art: React.ReactNode }[] = [
  { name: "Properties", art: <g stroke="none"><rect x="4" y="4" width="16" height="7" rx="3.500" fill={O} /><rect x="4" y="13" width="16" height="7" rx="3.500" fill={O} /><circle cx="16.500" cy="7.500" r="2.500" fill="#fff" /><circle cx="7.500" cy="16.500" r="2.500" fill="#fff" /></g> },
  { name: "Styles", art: <>{letter("A", 17, 13, 14)}<path d="M3 21L7 16.500" stroke="#f9917f" strokeWidth="3" /><path d="M4 12Q3 9 8 8Q10 8 11 10L16 15L12 19L7 14L4 15Z" fill="#fff" /></> },
  { name: "Gallery", art: <><rect x="2.500" y="3.500" width="16" height="13" rx="1" fill="#d65fd0" stroke="#333" /><rect x="5.500" y="7.500" width="16" height="13" rx="1" fill="#d65fd0" stroke="#333" /><path d="M9 18L12 13L14 15.500L15.500 14.500L18 18Z" fill="#fff" stroke="none" /><circle cx="17.500" cy="11.500" r="1" fill="#fff" stroke="none" /></> },
  { name: "Navigator", art: <><circle cx="12" cy="12" r="9.500" fill="#4a7be8" stroke="#444" /><path d="M8 16Q9 10 13 10L17 7L14 12Q13 15 8 16Z" fill="#eee" stroke="none" /><path d="M12.500 10.500L17 7L14.500 12Z" fill="#e0353b" stroke="none" /></> },
  { name: "Functions", art: <><path d="M12.500 4Q8 3 8 7.500V20M5 9.500H11.500" stroke="#222" strokeWidth="2" /><path d="M14 14.500L20 20.500M20 14.500L14 20.500" stroke="#333" strokeWidth="2" /></> },
];

function WinButton({ label, d }: { label: string; d: string }) {
  return (
    <button type="button" aria-label={label} className="flex h-[22px] w-[22px] items-center justify-center rounded-full bg-[#dadada]">
      <svg width="10" height="10" viewBox="0 0 10 10" fill="none" stroke="#333" strokeWidth="1.200" aria-hidden="true"><path d={d} /></svg>
    </button>
  );
}

const stat = "flex h-full items-center whitespace-nowrap pt-px";
const Bar = () => <span className="h-[14px] w-px shrink-0 bg-[#dcdcdc]" />;

export default function App() {
  return (
    <div className="flex h-screen flex-col overflow-hidden bg-[#fafafa] font-['Noto_Sans','Noto_Sans_CJK_SC',sans-serif] text-[14px] text-[#3d3d3d]">
      <header className="flex h-[27px] shrink-0 items-center bg-[#131313] text-[14px] text-[#e8e8e8]">
        <div className="flex flex-1 items-center">
          <button type="button" className="ml-[18px] text-[15px]">Activities</button>
          <button type="button" className="ml-[38px] flex items-center gap-2">
            <svg width="12" height="15" viewBox="0 0 12 15" aria-hidden="true"><path d="M0 0H8.500L12 3.500V15H0Z" fill="#eee" /><path d="M2.500 5.500H9.500V12H2.500ZM2.500 7.700H9.500M2.500 9.900H9.500M5 5.500V12M7.300 5.500V12" fill="none" stroke="#222" strokeWidth="0.900" /></svg>
            LibreOffice Calc
          </button>
        </div>
        <button type="button" className="flex items-center gap-[19px] pl-[124px]">
          <span className="whitespace-pre">Apr 21  20:11</span>
          <svg width="14" height="16" viewBox="0 0 14 16" fill="none" stroke="#eee" strokeWidth="1.200" aria-hidden="true"><path d="M1 12.500H13M3 12V7Q3 3 7 3Q11 3 11 7V12M1 5Q1.500 2 4 0.800M13 5Q12.500 2 10 0.800" /><path d="M5.500 14H8.500L7 15.500Z" fill="#eee" /></svg>
        </button>
        <div className="flex flex-1 items-center justify-end gap-[13px] pr-[18px]">
          <svg width="15" height="14" viewBox="0 0 15 14" aria-label="Volume"><path d="M0 4.500H3L7 0.500V13.500L3 9.500H0Z" fill="#eee" /><path d="M9.500 4.500Q11 7 9.500 9.500M12 2.500Q15 7 12 11.500" fill="none" stroke="#ddd" /></svg>
          <svg width="14" height="14" viewBox="0 0 14 14" fill="none" stroke="#eee" strokeWidth="1.300" aria-label="Power"><path d="M4 2A6.200 6.200 0 1 0 10 2M7 0V7" /></svg>
        </div>
      </header>

      <div className="flex min-h-0 flex-1">
        <nav aria-label="Dock" className="flex w-[70px] shrink-0 flex-col items-center gap-1 bg-linear-to-b from-[#190d15] via-[#1b0f18] to-[#291524] pt-[6px]">
          {dock.map((d) => <DockButton key={d.name} name={d.name} art={d.art} active={d.name === "LibreOffice Calc"} />)}
          <div className="-mt-px h-px w-12 shrink-0 bg-[#d8d4d6]" />
          <DockButton name="Trash" art={trash} />
          <div className="mb-1.5 mt-auto">
            <DockButton name="Show Applications" art={<g fill="#f2f2f2" stroke="none">{[9, 21, 33].map((y) => [9, 21, 33].map((x) => <rect key={`${x}-${y}`} x={x} y={y} width="6" height="6" rx="1.500" />))}</g>} />
          </div>
        </nav>

        <main className="flex min-w-0 flex-1 flex-col">
          <div className="flex h-[37px] shrink-0 items-center border-b border-[#b9b9b9] bg-[#ebebeb] pr-[7px]">
            <h1 className="flex-1 pl-[97px] text-center text-[15px] font-bold text-[#3d3d3d]">Employee_Roles_and_Ranks.xlsx - LibreOffice Calc</h1>
            <div className="flex gap-3">
              <WinButton label="Minimize" d="M1 8H9" />
              <WinButton label="Restore" d="M1 3.500H6.500V9H1ZM3 1H9V7" />
              <WinButton label="Close" d="M1 1L9 9M9 1L1 9" />
            </div>
          </div>
          <div className="flex h-[25px] shrink-0">
            <div className="flex flex-1 items-center gap-[17px] border-b border-[#dcdcdc] pl-[8px] text-[14px]">
              {menus.map((m) => <button type="button" key={m}>{m}</button>)}
            </div>
            <button type="button" aria-label="Close document" className="flex w-6 items-center"><svg width="9" height="9" viewBox="0 0 9 9" stroke="#333" strokeWidth="1.300" aria-hidden="true" className="ml-[3px]"><path d="M0.500 0.500L8.500 8.500M8.500 0.500L0.500 8.500" /></svg></button>
          </div>
          <div className="flex h-[38px] shrink-0 items-center pl-1">
            <Tools items={["New>", "Open>", "Save>", "|", "Export as PDF", "Print", "Print Preview", "|", "Cut", "Copy", "Paste>", "|", "Clone Formatting", "Clear Direct Formatting", "|", "Undo>", "Redo>", "|", "Find and Replace", "Spelling", "|", "Row>", "Column>", "|", "Sort", "Sort Ascending", "Sort Descending", "AutoFilter", "|", "Image", "Chart", "Pivot Table", "|", "Special Character>", "Hyperlink", "Comment", "Headers and Footers", "|", "Print Area", "Freeze>", "Split", "|", "Draw"]} />
          </div>
          <div className="flex h-[39px] shrink-0 items-center pl-1">
            <Combo label="Font Name" value="Arial" box="w-[221px]" />
            <div className="w-2 shrink-0" />
            <Combo label="Font Size" value="10 pt" box="w-[101px]" />
            <Tools items={["|", "Bold", "Italic", "Underline>", "|", "Font Color>", "Background Color>", "|", "Align Left", "Center Horizontally", "Align Right", "|", "Align Top", "Center Vertically", "Align Bottom", "|", "Wrap Text", "|", "Merge and Center Cells", "Merge Cells", "Unmerge Cells", "|", "Format as Currency>", "Format as Percent", "Format as Number", "Format as Date", "|", "Add Decimal Place", "Delete Decimal Place", "|", "Increase Indent", "Decrease Indent", "|", "Borders>", "Border Style>", "Border Color>", "|", "Conditional>"]} />
          </div>

          <div className="flex min-h-0 flex-1">
            <div className="flex min-w-0 flex-1 flex-col">
              <div className="flex h-10 shrink-0 items-center pl-1">
                <Combo label="Name Box" value="B2:B22" box="w-[173px]" />
                <Sep />
                <button type="button" aria-label="Function Wizard" className="ml-[5px]"><Ic s={18}><path d="M11 3Q6 2 6 8V21M2 9.500H10" stroke="#222" strokeWidth="2.600" /><path d="M13 15L19 21M19 15L13 21" stroke="#444" strokeWidth="1.800" /></Ic></button>
                <button type="button" aria-label="Select Function" className="ml-1 mr-1"><Ic s={16}><path d="M20 7V3H5L12 12L5 21H20V17" stroke="#333" strokeWidth="3" /></Ic></button>
                <Caret label="Select Function" />
                <button type="button" aria-label="Formula" className="mx-[7px]"><svg width="13" height="8" viewBox="0 0 13 8" stroke="#333" strokeWidth="2" aria-hidden="true"><path d="M0 1H13M0 6.500H13" /></svg></button>
                <input aria-label="Formula input" defaultValue="Benedict Cucumberbach Manager" className="h-6 min-w-0 flex-1 border border-[#c4c4c4] bg-white px-1.5 text-[14px] text-[#3d3d3d] outline-none" />
                <button type="button" aria-label="Expand Formula Bar" className="flex w-[22px] justify-center"><Chevron /></button>
              </div>
              <InfoBar text="Help us make LibreOffice even better!" action="Get involved" />
              <InfoBar text="Your donations support our worldwide community." action="Donate" />
              <div className="flex min-h-0 flex-1">
                <Sheet />
                <div className="flex w-3 shrink-0 flex-col items-center">
                  <div className="flex h-[5px] w-full items-center justify-center bg-[#b5b5b5]"><div className="h-px w-1.5 bg-black" /></div>
                  <div className="mt-[5px] h-[351px] w-1.5 rounded-full bg-[#8a8a8a]" />
                </div>
              </div>
              <div className="flex h-3 shrink-0 items-center pl-[5px] pr-3 pt-[2px]">
                <div className="h-1.5 w-[47%] rounded-full bg-[#8a8a8a]" />
                <div className="ml-auto flex h-full w-[5px] items-center justify-center bg-[#b5b5b5]"><div className="h-1.5 w-px bg-black" /></div>
              </div>
              <div className="flex h-[26px] shrink-0 items-center pl-[10px]">
                <div className="flex items-center gap-[10px]">
                  <button type="button" aria-label="First sheet"><svg width="16" height="14" viewBox="0 0 16 14" fill="none" stroke="#f5a288" strokeWidth="2" aria-hidden="true"><path d="M1 1V13M4 7H16M8 3L4 7L8 11" /></svg></button>
                  <button type="button" aria-label="Previous sheet"><svg width="15" height="10" viewBox="0 0 15 10" fill="#999" aria-hidden="true"><path d="M0 0H1.500V10H0ZM8 0V10L1.500 5ZM15 0V10L8 5Z" /></svg></button>
                  <button type="button" aria-label="Next sheet"><svg width="15" height="10" viewBox="0 0 15 10" fill="#999" aria-hidden="true"><path d="M15 0H13.500V10H15ZM7 0V10L13.500 5ZM0 0V10L7 5Z" /></svg></button>
                  <button type="button" aria-label="Last sheet"><svg width="16" height="14" viewBox="0 0 16 14" fill="none" stroke="#f5a288" strokeWidth="2" aria-hidden="true"><path d="M15 1V13M12 7H0M8 3L12 7L8 11" /></svg></button>
                </div>
                <button type="button" aria-label="Add sheet" className="ml-[14px] mr-[9px]"><svg width="18" height="18" viewBox="0 0 18 18" fill="#fff" stroke={G} strokeWidth="1.200" aria-hidden="true"><path d="M3 1.500H10L14.500 6V15Q14.500 16.500 13 16.500H3Q1.500 16.500 1.500 15V3Q1.500 1.500 3 1.500Z" /><circle cx="12.500" cy="13.500" r="4" fill="#138a2a" stroke="none" /><path d="M10.500 13.500H14.500M12.500 11.500V15.500" stroke="#fff" /></svg></button>
                <button type="button" className="h-full w-[68px] border-b-[3px] border-[#999] bg-white pt-px text-[12px] font-bold text-[#333]">工作表1</button>
              </div>
            </div>
            <aside className="relative flex w-[59px] shrink-0 flex-col items-center gap-2 border-l border-[#b9b9b9] pt-[14px]">
              <button type="button" aria-label="Sidebar Settings" className="mb-[13px]"><svg width="10" height="13" viewBox="0 0 10 13" stroke="#333" strokeWidth="1.200" aria-hidden="true"><path d="M0 2.500H10M0 6.500H10M0 10.500H10" /></svg></button>
              {side.map((s, i) => (
                <button type="button" key={s.name} aria-label={s.name} className={i === 0 ? "flex h-[34px] w-9 items-center justify-center rounded-md border border-[#c4c4c4] bg-[#d5d5d5]" : "flex h-[34px] w-9 items-center justify-center"}><Ic>{s.art}</Ic></button>
              ))}
              <button type="button" aria-label="Hide sidebar" className="absolute left-0 top-[411px] flex h-[72px] w-1.5 items-center justify-center bg-[#8f8f8f]"><svg width="4" height="8" viewBox="0 0 4 8" aria-hidden="true"><path d="M0 0L4 4L0 8Z" fill="#fff" /></svg></button>
            </aside>
          </div>

          <footer className="flex h-[21px] shrink-0 items-center border-t border-[#b9b9b9] text-[12px]">
            <div className={stat + " w-[258px] pl-[10px]"}>Sheet 1 of 1</div><Bar />
            <div className={stat + " w-[349px] pl-2"}>Selected: 21 rows, 1 column</div><Bar />
            <div className={stat + " w-[302px] pl-2"}>PageStyle_工作表1</div><Bar />
            <div className={stat + " w-[299px] justify-center"}>English (Hong Kong)</div><Bar />
            <div className="w-[67px]" /><Bar />
            <div className={stat + " w-7 justify-center"}><svg width="18" height="10" viewBox="0 0 18 10" fill="none" aria-label="Selection mode"><rect x="1" y="2" width="8" height="5.500" stroke={O} strokeWidth="1.300" /><path d="M12 0.500H17M12 9.500H17M14.500 0.500V9.500" stroke="#222" /></svg></div><Bar />
            <div className={stat + " w-7 justify-center"}><svg width="12" height="13" viewBox="0 0 12 13" aria-label="Document modified"><path d="M4 1H7V5H9.500L5.500 10L1.500 5H4Z" fill="#8cc63f" stroke="#555" /><path d="M1 12H10" stroke="#555" strokeWidth="1.500" /><circle cx="10.500" cy="2" r="1.500" fill="#d0203a" /></svg></div><Bar />
            <div className="w-7" /><Bar />
            <div className={stat + " flex-1 justify-center"}>Average: ; Sum: 0</div><Bar />
            <div className={stat + " w-[142px] justify-center gap-[6px]"}>
              <button type="button" aria-label="Zoom out" className="h-[2px] w-2 bg-[#666]" />
              <input type="range" aria-label="Zoom" defaultValue={50} className="h-[10px] w-[97px] appearance-none bg-transparent [&::-webkit-slider-runnable-track]:h-[2px] [&::-webkit-slider-runnable-track]:bg-[#999] [&::-webkit-slider-thumb]:-mt-[3px] [&::-webkit-slider-thumb]:h-2 [&::-webkit-slider-thumb]:w-2 [&::-webkit-slider-thumb]:appearance-none [&::-webkit-slider-thumb]:rounded-full [&::-webkit-slider-thumb]:border [&::-webkit-slider-thumb]:border-[#555] [&::-webkit-slider-thumb]:bg-white" />
              <button type="button" aria-label="Zoom in"><svg width="8" height="8" viewBox="0 0 8 8" stroke="#555" strokeWidth="2" aria-hidden="true"><path d="M0 4H8M4 0V8" /></svg></button>
            </div><Bar />
            <div className={stat + " w-[47px] justify-center"}>100%</div>
          </footer>
        </main>
      </div>
    </div>
  );
}
